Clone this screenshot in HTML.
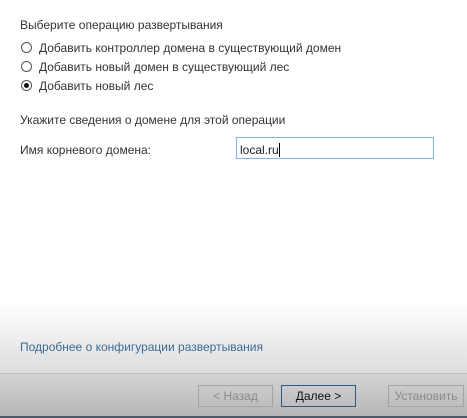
<!DOCTYPE html>
<html><head><meta charset="utf-8"><style>
html,body{margin:0;padding:0}
body{width:467px;height:418px;position:relative;overflow:hidden;background:#fff;font-family:"Liberation Sans","DejaVu Sans",sans-serif;font-size:12px;color:#333}
.t{position:absolute;white-space:nowrap;line-height:14px}
.r{position:absolute;width:11px;height:11px;border:1px solid #555;border-radius:50%;box-sizing:border-box;background:#fff}
.r.on::after{content:"";position:absolute;left:2px;top:2px;width:5px;height:5px;border-radius:50%;background:#111}
.grad{position:absolute;left:0;top:300px;width:467px;height:74px;background:linear-gradient(#fff 0%,#f6f6f6 30%,#dcdcdc 100%)}
.line{position:absolute;left:0;top:373px;width:467px;height:1px;background:#bdbdbd}
.foot{position:absolute;left:0;top:374px;width:467px;height:44px;background:linear-gradient(#d4d4d4,#b5b5b5)}
.bot{position:absolute;left:0;top:416px;width:467px;height:2px;background:#4d5a66}
.b{position:absolute;top:385px;height:22px;box-sizing:border-box;border:1px solid #a3a3a3;text-align:center;line-height:20px;color:#8a8a8a;font-size:12px}
</style></head><body>
<div class="t" style="left:20px;top:18px">Выберите операцию развертывания</div>
<div class="r" style="left:21px;top:42px"></div>
<div class="t" style="left:39px;top:41px">Добавить контроллер домена в существующий домен</div>
<div class="r" style="left:21px;top:61px"></div>
<div class="t" style="left:39px;top:60px">Добавить новый домен в существующий лес</div>
<div class="r on" style="left:21px;top:80px"></div>
<div class="t" style="left:39px;top:79px">Добавить новый лес</div>
<div class="t" style="left:20px;top:113px">Укажите сведения о домене для этой операции</div>
<div class="t" style="left:20px;top:143px">Имя корневого домена:</div>
<div style="position:absolute;left:236px;top:137px;width:198px;height:22px;box-sizing:border-box;border:1px solid #7eb4ea;background:#fff"></div>
<div class="t" style="left:240px;top:143px;color:#222">local.ru<span style="display:inline-block;width:1px;height:14px;background:#000;vertical-align:-3px"></span></div>
<div class="grad"></div>
<div class="t" style="left:20px;top:340px;color:#3a6a94">Подробнее о конфигурации развертывания</div>
<div class="line"></div>
<div class="foot"></div>
<div class="b" style="left:198px;width:75px">&lt; Назад</div>
<div class="b" style="left:281px;width:75px;border-color:#2d5a86;color:#111">Далее &gt;</div>
<div class="b" style="left:388px;width:76px">Установить</div>
<div class="bot"></div>
</body></html>
